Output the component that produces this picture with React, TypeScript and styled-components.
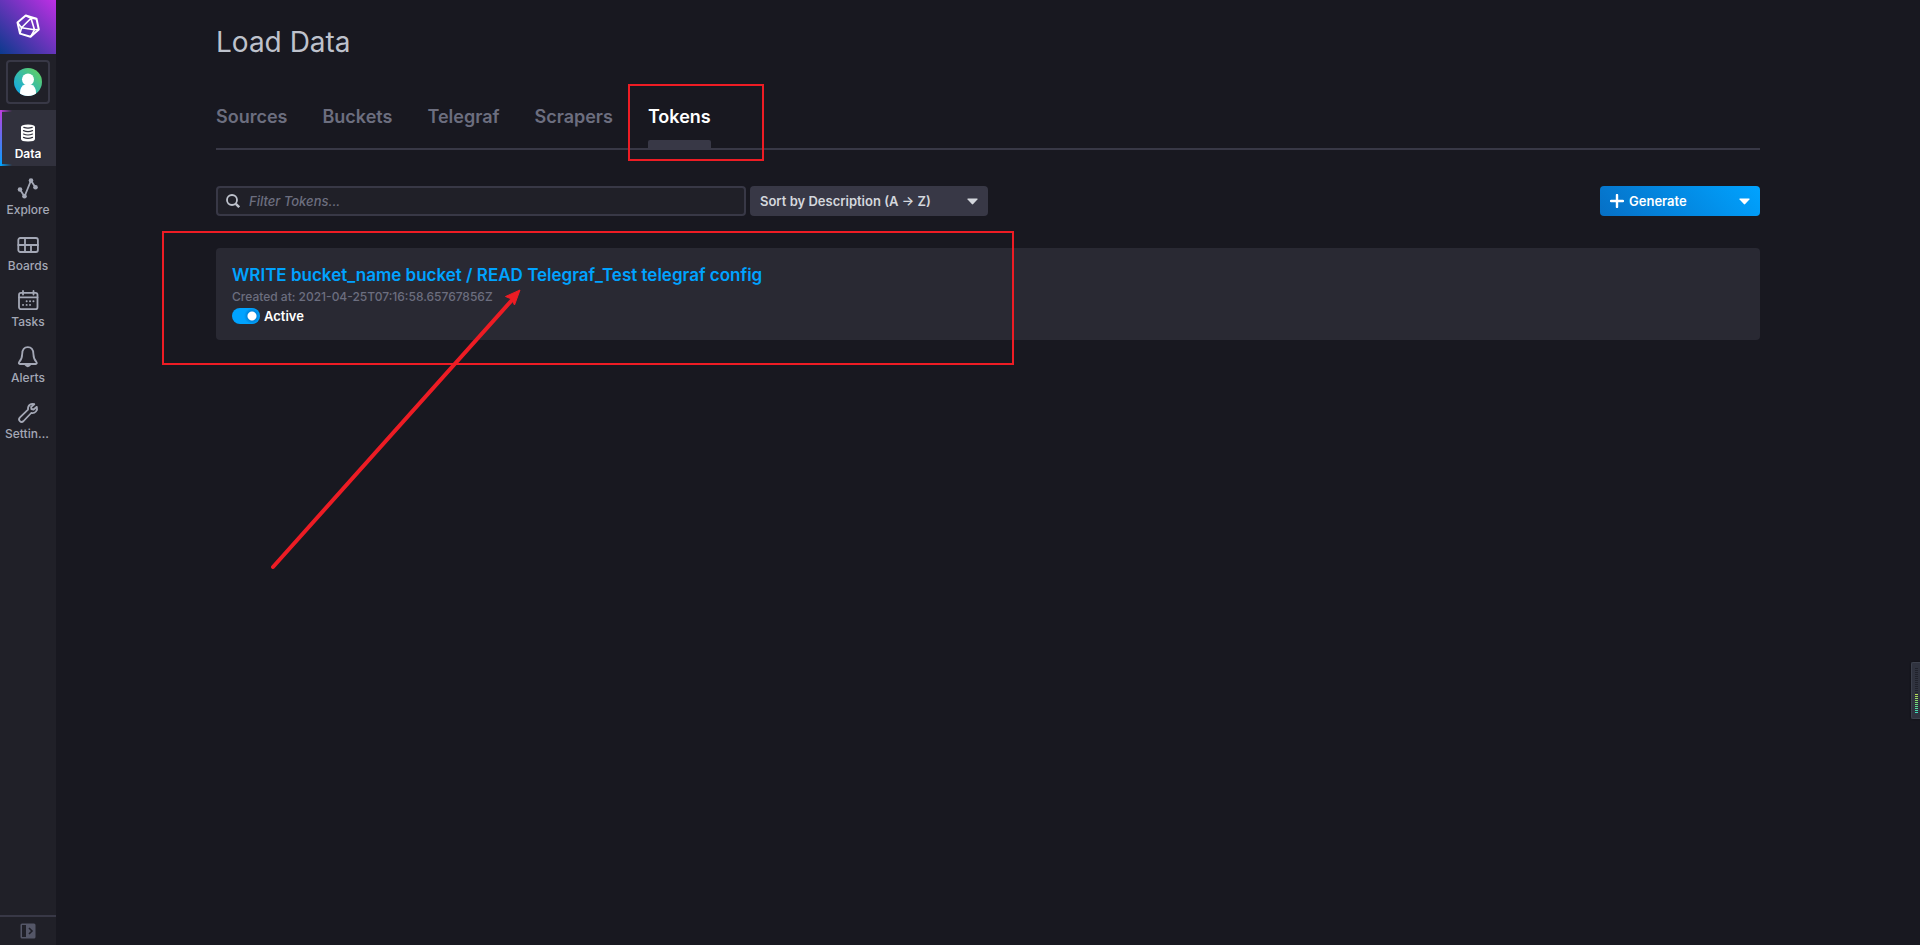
import React from "react";
import styled, { createGlobalStyle, css } from "styled-components";

const c = {
  page: "#181820",
  panel: "#202028",
  card: "#292933",
  active: "#31313d",
  line: "#383846",
  dim: "#545667",
  muted: "#6c6e7f",
  nav: "#a4a8b6",
  heading: "#bec2cc",
  light: "#d4d7dd",
  blue: "#00a3ff",
  mark: "#ed1c24",
};

const GlobalStyle = createGlobalStyle`
  *, *::before, *::after { box-sizing: border-box; }
  body {
    margin: 0;
    background: ${c.page};
    color: ${c.light};
    font: 500 13px/16px Inter, "Liberation Sans", sans-serif;
    overflow-x: hidden;
  }
  a { color: inherit; text-decoration: none; }
  button, input, select { font: inherit; margin: 0; }
  svg { display: block; flex: none; }
`;

const Shell = styled.div`
  position: relative;
  display: flex;
  min-height: 100vh;
`;

const Sidebar = styled.aside`
  flex: none;
  width: 56px;
  display: flex;
  flex-direction: column;
  background: ${c.panel};
`;

const Logo = styled.a`
  height: 54px;
  display: grid;
  place-items: center;
  color: #fff;
  background: linear-gradient(45deg, #0b3a8d, #bf2fe5);
`;

const Account = styled.button`
  width: 44px;
  height: 44px;
  margin: 6px;
  padding: 0;
  display: grid;
  place-items: center;
  background: ${c.panel};
  border: 2px solid ${c.line};
  border-radius: 4px;
`;

const Nav = styled.nav`
  flex: 1;
  display: flex;
  flex-direction: column;
`;

const NavItem = styled.a<{ $active?: boolean }>`
  position: relative;
  height: 56px;
  padding: 11px 5px 0;
  display: flex;
  flex-direction: column;
  align-items: center;
  gap: 1px;
  color: ${c.nav};
  font-size: 12px;
  ${(p) =>
    p.$active &&
    css`
      color: #fff;
      font-weight: 600;
      background: ${c.active};
      &::before {
        content: "";
        position: absolute;
        inset: 0 auto 0 0;
        width: 12px;
        background:
          linear-gradient(#bf3ddf, ${c.blue}) left / 2px 100% no-repeat,
          linear-gradient(90deg, #bf3ddf, transparent) top / 100% 2px no-repeat,
          linear-gradient(90deg, ${c.blue}, transparent) bottom / 100% 2px no-repeat;
      }
    `}
`;

const NavLabel = styled.span`
  max-width: 100%;
  overflow: hidden;
  white-space: nowrap;
  text-overflow: ellipsis;
`;

const Collapse = styled.button`
  height: 30px;
  padding: 0;
  display: grid;
  place-items: center;
  background: none;
  border: 0;
  border-top: 2px solid ${c.line};
`;

const Main = styled.main`
  flex: 1;
  min-width: 0;
  padding: 24px 160px;
`;

const Title = styled.h1`
  margin: 0;
  color: ${c.heading};
  font-size: 28px;
  line-height: 36px;
  font-weight: 400;
`;

const Tabs = styled.nav`
  margin-top: 24px;
  height: 66px;
  display: flex;
  gap: 35px;
  border-bottom: 2px solid ${c.line};
`;

const Tab = styled.a<{ $active?: boolean }>`
  display: flex;
  flex-direction: column;
  justify-content: space-between;
  padding-top: 20px;
  font-size: 18px;
  line-height: 26px;
  font-weight: 600;
  color: ${(p) => (p.$active ? "#fff" : c.muted)};
  &::after {
    content: "";
    height: 8px;
    border-radius: 2px 2px 0 0;
    background: ${(p) => (p.$active ? c.line : "transparent")};
  }
`;

const Toolbar = styled.div`
  margin-top: 36px;
  display: flex;
  gap: 4px;
`;

const SearchBox = styled.label`
  flex: 0 1 530px;
  height: 30px;
  padding: 0 8px;
  display: flex;
  align-items: center;
  gap: 9px;
  color: ${c.heading};
  background: ${c.panel};
  border: 2px solid ${c.line};
  border-radius: 4px;
`;

const SearchInput = styled.input`
  flex: 1;
  min-width: 0;
  padding: 0;
  border: 0;
  outline: 0;
  background: none;
  color: inherit;
  &::placeholder {
    color: ${c.muted};
    font-style: italic;
    opacity: 1;
  }
`;

const SortBox = styled.div`
  width: 238px;
  height: 30px;
  display: grid;
  align-items: center;
  color: ${c.light};
  background: ${c.line};
  border-radius: 4px;
  > * { grid-area: 1 / 1; }
  > svg { justify-self: end; margin-right: 10px; pointer-events: none; }
`;

const SortSelect = styled.select`
  appearance: none;
  width: 100%;
  height: 30px;
  padding: 0 10px;
  border: 0;
  background: none;
  color: inherit;
  font-weight: 600;
`;

const Generate = styled.button`
  width: 160px;
  height: 30px;
  margin-left: auto;
  padding: 0 10px;
  display: flex;
  align-items: center;
  gap: 5px;
  border: 0;
  border-radius: 4px;
  color: #fff;
  font-weight: 600;
  background: linear-gradient(45deg, #066fc5, ${c.blue});
  > :last-child { margin-left: auto; }
`;

const Card = styled.article`
  margin-top: 32px;
  padding: 16px;
  background: ${c.card};
  border-radius: 4px;
`;

const TokenName = styled.h2`
  margin: 0;
  color: ${c.blue};
  font-size: 17px;
  line-height: 22px;
  font-weight: 600;
`;

const Created = styled.p`
  margin: 0;
  padding: 3px 0;
  color: ${c.muted};
  font-size: 12px;
`;

const ToggleRow = styled.label`
  display: flex;
  align-items: center;
  gap: 4px;
  color: #fff;
  font-weight: 600;
`;

const Toggle = styled.input`
  appearance: none;
  width: 28px;
  height: 16px;
  border-radius: 8px;
  background: radial-gradient(circle at 20px 8px, #fff 4px, #0086dd 5px, ${c.blue} 8px);
`;

const Outline = styled.div<{ $x: number; $y: number; $w: number; $h: number }>`
  position: absolute;
  left: ${(p) => p.$x}px;
  top: ${(p) => p.$y}px;
  width: ${(p) => p.$w}px;
  height: ${(p) => p.$h}px;
  border: 2px solid ${c.mark};
  pointer-events: none;
`;

const Arrow = styled.svg`
  position: absolute;
  left: 270px;
  top: 288px;
  pointer-events: none;
`;

const Meter = styled.div`
  position: absolute;
  right: 0;
  top: 662px;
  width: 9px;
  height: 57px;
  padding: 5px 2px 0 3px;
  display: flex;
  flex-direction: column;
  gap: 1px;
  background: #30333f;
  border: 1px solid #3d414d;
  border-right: 0;
  border-radius: 2px 0 0 2px;
  box-shadow: 0 0 2px #08080c;
`;

const MeterBar = styled.i<{ $color: string }>`
  height: 1px;
  background: ${(p) => p.$color};
`;

const Caret = () => (
  <svg width="11" height="7" viewBox="0 0 11 7" aria-hidden="true">
    <path d="M1 .5h9q1 .2.4 1L6.2 6.1q-.7.7-1.4 0L.6 1.5Q0 .7 1 .5z" fill="currentColor" />
  </svg>
);

const Icon = ({ children }: { children: React.ReactNode }) => (
  <svg
    width="24"
    height="24"
    viewBox="0 0 24 24"
    fill="none"
    stroke="currentColor"
    strokeWidth="1.8"
    strokeLinecap="round"
    strokeLinejoin="round"
    aria-hidden="true"
  >
    {children}
  </svg>
);

const LogoIcon = () => (
  <svg
    width="24"
    height="26"
    viewBox="0 0 24 26"
    fill="none"
    stroke="currentColor"
    strokeWidth="2"
    strokeLinejoin="round"
    aria-hidden="true"
  >
    <path d="M9.700 1.500L20.500 4.800 22.800 15.500 14.500 22.800 4 19.600 1.500 8.600z" />
    <path
      d="M15 4.300L5.500 13.800 18.500 15.800zM9.700 1.500L15 4.300 20.500 4.800M1.500 8.600l4 5.200-1.500 5.800M22.800 15.500l-4.300.3-4 7"
      strokeWidth="1.600"
    />
  </svg>
);

const DataIcon = () => (
  <Icon>
    <path
      d="M5 6Q5 3.5 12 3.5T19 6v12q0 2.5-7 2.5T5 18z"
      fill="currentColor"
      stroke="none"
    />
    <g stroke={c.active} strokeWidth="1.2">
      <path d="M7.8 6.4q4.2 1.3 8.4 0M7.5 9.6q4.5 2 9 0M7.5 13q4.5 2 9 0M7.5 16.4q4.5 2 9 0" />
    </g>
  </Icon>
);

const ExploreIcon = () => (
  <Icon>
    <path d="M4 12.5l4.500 7L15 3.500l4.500 7" />
    <g fill="currentColor" stroke="none">
      <circle cx="4" cy="12.5" r="2.3" />
      <circle cx="8.5" cy="19.3" r="2.3" />
      <circle cx="15" cy="3.5" r="2.3" />
      <circle cx="19.5" cy="10.2" r="2.3" />
    </g>
  </Icon>
);

const BoardsIcon = () => (
  <Icon>
    <rect x="2.3" y="5" width="19.6" height="14" rx="2" />
    <path d="M2.3 12h19.6M9 5v14M15 12v7" />
  </Icon>
);

const TasksIcon = () => (
  <Icon>
    <rect x="3" y="3.8" width="18.5" height="16.4" rx="2" />
    <path d="M3 8.3h18.5M7 2v3.5M17.5 2v3.5" />
    <path
      d="M10.6 12.3h.1M14 12.3h.1M17.4 12.3h.1M7 15.9h.1M10.6 15.9h.1M14 15.9h.1"
      strokeWidth="1.9"
    />
  </Icon>
);

const AlertsIcon = () => (
  <Icon>
    <path d="M11.800 2.200c-4.500 0-5.500 3.300-5.600 6.800-.1 4.500-1.500 6.500-3.100 8.200-.6.900-.3 1.800.8 1.800h15.800c1.100 0 1.400-.9.800-1.800-1.600-1.700-3-3.700-3.100-8.200-.1-3.500-1.100-6.800-5.600-6.800z" />
    <path d="M9.200 19.500q2.600 3.500 5.200 0z" fill="currentColor" />
  </Icon>
);

const SettingsIcon = () => (
  <Icon>
    <path d="M18.300 3.200c-3-1.200-6.800 1-6.300 5.500L4 16.300c-2.600 2.600 1 6.200 3.600 3.700l7.600-8c4 .7 6.800-2.600 5.600-6.200l-3.200 2.700-2.200-.5-.3-2z" />
  </Icon>
);

const navItems = [
  { label: "Data", icon: <DataIcon />, active: true },
  { label: "Explore", icon: <ExploreIcon /> },
  { label: "Boards", icon: <BoardsIcon /> },
  { label: "Tasks", icon: <TasksIcon /> },
  { label: "Alerts", icon: <AlertsIcon /> },
  { label: "Settings", icon: <SettingsIcon /> },
];

const tabs = ["Sources", "Buckets", "Telegraf", "Scrapers", "Tokens"];

const meterBars = [
  ...Array<string>(13).fill("#20222b"),
  "#b5d957", "#a6db5c", "#97dc62", "#88dd6a", "#79dd74",
  "#6bdd80", "#5fdd8e", "#54dc9d", "#4adaac", "#40d8bb",
];

export default function App() {
  return (
    <>
      <GlobalStyle />
      <Shell>
        <Sidebar>
          <Logo href="#" aria-label="Home">
            <LogoIcon />
          </Logo>
          <Account aria-label="Account">
            <svg width="28" height="28" viewBox="0 0 28 28" aria-hidden="true">
              <defs>
                <linearGradient id="avatar" x1="0" y1="1" x2="1" y2="0">
                  <stop offset=".1" stopColor="#12a9e6" />
                  <stop offset=".9" stopColor="#60cf65" />
                </linearGradient>
                <clipPath id="disc">
                  <circle cx="14" cy="14" r="14" />
                </clipPath>
              </defs>
              <circle cx="14" cy="14" r="14" fill="url(#avatar)" />
              <g fill="#fff" clipPath="url(#disc)">
                <circle cx="14" cy="11.5" r="6" />
                <path d="M6 28v-3q0-7 5-8.500h6q5 1.500 5 8.500v3z" />
              </g>
            </svg>
          </Account>
          <Nav aria-label="Main">
            {navItems.map((item) => (
              <NavItem key={item.label} href="#" $active={item.active}>
                {item.icon}
                <NavLabel>{item.label}</NavLabel>
              </NavItem>
            ))}
          </Nav>
          <Collapse aria-label="Expand sidebar">
            <svg width="16" height="16" viewBox="0 0 16 16" aria-hidden="true">
              <rect x=".5" y=".5" width="15" height="15" rx="1.5" fill={c.dim} />
              <path d="M2 2h4v12H2z" fill={c.panel} />
              <path d="M9 5l3 3-3 3" fill="none" stroke={c.panel} strokeWidth="1.6" />
            </svg>
          </Collapse>
        </Sidebar>

        <Main>
          <Title>Load Data</Title>
          <Tabs aria-label="Load Data">
            {tabs.map((tab) => (
              <Tab key={tab} href="#" $active={tab === "Tokens"}>
                {tab}
              </Tab>
            ))}
          </Tabs>

          <Toolbar>
            <SearchBox>
              <svg width="14" height="14" viewBox="0 0 14 14" fill="none" stroke="currentColor" aria-hidden="true">
                <circle cx="6" cy="6" r="5" strokeWidth="1.8" />
                <path d="M9.800 9.800l3.400 3.400" strokeWidth="2.4" />
              </svg>
              <SearchInput placeholder="Filter Tokens..." aria-label="Filter Tokens" />
            </SearchBox>
            <SortBox>
              <SortSelect aria-label="Sort tokens">
                <option>Sort by Description (A → Z)</option>
              </SortSelect>
              <Caret />
            </SortBox>
            <Generate>
              <svg width="14" height="14" viewBox="0 0 14 14" aria-hidden="true">
                <path d="M7 1v12M1 7h12" stroke="currentColor" strokeWidth="2.4" strokeLinecap="round" />
              </svg>
              <span>Generate</span>
              <Caret />
            </Generate>
          </Toolbar>

          <Card>
            <TokenName>
              <a href="#">WRITE bucket_name bucket / READ Telegraf_Test telegraf config</a>
            </TokenName>
            <Created>Created at: 2021-04-25T07:16:58.65767856Z</Created>
            <ToggleRow>
              <Toggle type="checkbox" role="switch" defaultChecked />
              Active
            </ToggleRow>
          </Card>
        </Main>

        <Outline $x={628} $y={84} $w={136} $h={77} />
        <Outline $x={162} $y={231} $w={852} $h={134} />
        <Arrow width="254" height="284" viewBox="0 0 254 284" aria-hidden="true">
          <path d="M3 279L243 11" stroke={c.mark} strokeWidth="4" strokeLinecap="round" />
          <path d="M250 2L235.500 8.500l6 2.500 3 6z" fill={c.mark} stroke={c.mark} />
        </Arrow>
        <Meter aria-hidden="true">
          {meterBars.map((color, i) => (
            <MeterBar key={i} $color={color} />
          ))}
        </Meter>
      </Shell>
    </>
  );
}
